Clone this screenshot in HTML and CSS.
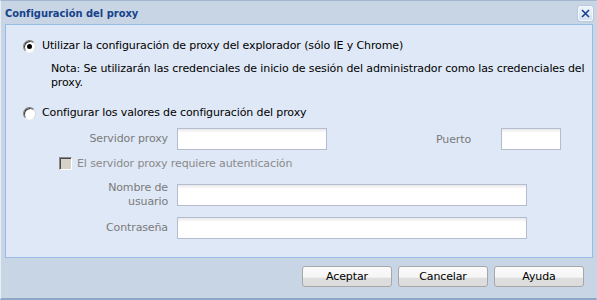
FILE: index.html
```html
<!DOCTYPE html>
<html lang="es">
<head>
<meta charset="utf-8">
<title>Configuración del proxy</title>
<link rel="stylesheet" href="styles.css">
</head>
<body>
<div class="window">
  <div class="header">
    <span class="title">Configuración del proxy</span>
    <span class="close">
      <svg width="15" height="15" viewBox="0 0 15 15">
        <path d="M4 4 L11 11 M11 4 L4 11" stroke="#15428b" stroke-width="1.6" fill="none"/>
      </svg>
    </span>
  </div>
  <div class="panel">
    <div class="radio-row first">
      <span class="radio checked"></span>
      <span>Utilizar la configuración de proxy del explorador (sólo IE y Chrome)</span>
    </div>
    <div class="note">Nota: Se utilizarán las credenciales de inicio de sesión del administrador como las credenciales del proxy.</div>
    <div class="radio-row second">
      <span class="radio"></span>
      <span>Configurar los valores de configuración del proxy</span>
    </div>
    <div class="field-row server">
      <label class="lbl">Servidor proxy</label>
      <span class="input w150"></span>
      <label class="port-lbl">Puerto</label>
      <span class="input w60"></span>
    </div>
    <div class="check-row">
      <span class="checkbox"></span>
      <span>El servidor proxy requiere autenticación</span>
    </div>
    <div class="field-row user">
      <label class="lbl">Nombre de<br>usuario</label>
      <span class="input w350"></span>
    </div>
    <div class="field-row pass">
      <label class="lbl">Contraseña</label>
      <span class="input w350"></span>
    </div>
  </div>
  <div class="footer">
    <button class="btn">Aceptar</button>
    <button class="btn">Cancelar</button>
    <button class="btn">Ayuda</button>
  </div>
</div>
</body>
</html>
```
FILE: styles.css
```css
* { box-sizing: border-box; }
html, body { margin: 0; padding: 0; }
body {
  width: 597px;
  height: 300px;
  overflow: hidden;
  font-family: "DejaVu Sans", sans-serif;
  font-size: 11px;
  letter-spacing: -0.12px;
  color: #000;
}
.window {
  width: 597px;
  height: 300px;
  background: #c8d5e4;
  border-top: 1px solid #a5b6cf;
  border-left: 1px solid #e9eef5;
  border-right: 1px solid #c8d5e4;
  border-bottom: 2px solid #8fa7c6;
  display: flex;
  flex-direction: column;
}
.header {
  height: 23px;
  display: flex;
  align-items: center;
  justify-content: space-between;
  padding: 0 3px 0 4px;
}
.title {
  font-family: "DejaVu Sans Condensed", "DejaVu Sans", sans-serif;
  font-weight: bold;
  color: #15428b;
  font-size: 11px;
  letter-spacing: 0;
  padding-top: 1px;
}
.close {
  width: 15px;
  height: 15px;
  margin-top: 1px;
  border: 1px solid #f4f8fc;
  border-radius: 2px;
  background: linear-gradient(#eef3fa, #d5e1f0);
  display: flex;
  box-shadow: 0 0 0 1px #b8c8dd;
}
.close svg { display: block; margin: -1px; }
.panel {
  margin: 0 3px 0 4px;
  height: 234px;
  border: 1px solid #99bbe8;
  background: #dfe8f6;
  padding: 14px 0 0 0;
}
.radio-row {
  display: flex;
  align-items: center;
  height: 14px;
  line-height: 14px;
  padding-left: 17px;
  gap: 6px;
}
.radio {
  width: 13px;
  height: 13px;
  border-radius: 50%;
  border: 1px solid;
  border-color: #7b7b7b #d8d8d8 #f4f4f4 #7b7b7b;
  background: #fff;
  box-shadow: inset 1px 1px 0 #3d3d3d;
  position: relative;
  flex: none;
}
.radio.checked::after {
  content: "";
  position: absolute;
  left: 3px;
  top: 3px;
  width: 5px;
  height: 5px;
  border-radius: 50%;
  background: #000;
}
.note {
  margin: 9px 6px 0 45px;
  line-height: 14px;
}
.radio-row.second { margin-top: 16px; }
.field-row {
  display: flex;
  align-items: center;
}
.field-row.server { margin-top: 8px; height: 22px; }
.lbl {
  width: 162px;
  margin-right: 9px;
  text-align: right;
  color: #7a7a7a;
  line-height: 14px;
}
.port-lbl {
  margin-left: 109px;
  width: 65px;
  color: #7a7a7a;
}
.input {
  display: block;
  height: 22px;
  border: 1px solid #b5bccd;
  background: linear-gradient(#e9e9e9 0, #fff 4px, #fff 100%);
}
.w150 { width: 150px; }
.w60 { width: 60px; }
.w350 { width: 350px; }
.check-row {
  margin-top: 7px;
  display: flex;
  align-items: center;
  height: 13px;
  padding-left: 53px;
  gap: 5px;
  color: #8a8a8a;
}
.checkbox {
  width: 13px;
  height: 13px;
  flex: none;
  border: 1px solid;
  border-color: #8a8a8a #fff #fff #8a8a8a;
  background: #d6d2ca;
  box-shadow: inset 1px 1px 0 #4a4a4a;
}
.field-row.user { margin-top: 11px; height: 28px; }
.field-row.pass { margin-top: 8px; height: 22px; }
.footer {
  display: flex;
  justify-content: flex-end;
  gap: 6px;
  padding: 8px 12px 0 0;
}
.btn {
  width: 90px;
  height: 21px;
  font-family: inherit;
  font-size: 11px;
  letter-spacing: inherit;
  color: #000;
  border: 1px solid #a7a7a7;
  border-radius: 3px;
  background: linear-gradient(#fbfbfb 0, #f5f5f5 55%, #dedede 56%, #dcdcdc 100%);
  padding: 0;
  line-height: 19px;
}
```
